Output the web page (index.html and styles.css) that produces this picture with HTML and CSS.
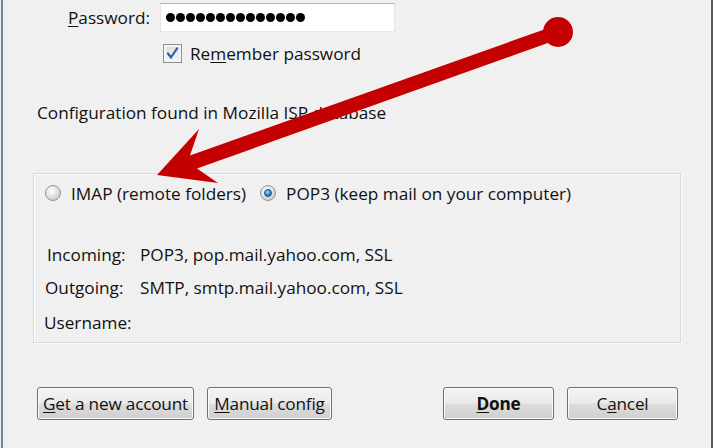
FILE: index.html
```html
<!DOCTYPE html>
<html>
<head>
<meta charset="utf-8">
<link rel="stylesheet" href="styles.css">
</head>
<body>
<div class="window">
  <div class="pw-row">
    <label class="pw-label"><u>P</u>assword:</label>
    <div class="input">
      <span class="dot"></span><span class="dot"></span><span class="dot"></span><span class="dot"></span><span class="dot"></span><span class="dot"></span><span class="dot"></span><span class="dot"></span><span class="dot"></span><span class="dot"></span><span class="dot"></span><span class="dot"></span><span class="dot"></span><span class="dot"></span>
    </div>
  </div>
  <div class="check-row">
    <span class="checkbox">
      <svg width="13" height="13" viewBox="0 0 13 13"><path d="M2 6.5 L5 10.5 L11 1.5" fill="none" stroke="#2c5fb0" stroke-width="2.2" stroke-linecap="round" stroke-linejoin="round"/></svg>
    </span>
    <span class="check-text">Re<u>m</u>ember password</span>
  </div>
  <div class="config">Configuration found in Mozilla ISP database</div>
  <div class="group">
    <div class="radio-row">
      <span class="radio"></span>
      <span class="radio-text">IMAP (remote folders)</span>
      <span class="radio checked"></span>
      <span class="radio-text">POP3 (keep mail on your computer)</span>
    </div>
    <div class="details">
      <span class="dl in">Incoming:</span><span class="dv">POP3, pop.mail.yahoo.com, SSL</span>
      <span class="dl out">Outgoing:</span><span class="dv">SMTP, smtp.mail.yahoo.com, SSL</span>
      <span class="dl user">Username:</span><span class="dv"></span>
    </div>
  </div>
  <div class="buttons">
    <button class="btn btn-get"><u>G</u>et a new account</button>
    <button class="btn btn-manual"><u>M</u>anual config</button>
    <span class="spacer"></span>
    <button class="btn btn-done"><b><u>D</u>one</b></button>
    <button class="btn btn-cancel">C<u>a</u>ncel</button>
  </div>
  <svg class="arrow" width="713" height="448" viewBox="0 0 713 448">
    <polygon points="157,175 199,129 190,155.5 555.6,25.4 560.4,38.6 197,168.5 218,183" fill="#c40000"/>
    <circle cx="558" cy="32" r="15" fill="#c40000"/>
  </svg>
</div>
</body>
</html>
```

FILE: styles.css
```css
* { box-sizing: border-box; }
html, body { margin: 0; padding: 0; }
body {
  width: 713px;
  height: 448px;
  overflow: hidden;
  background: #f0f0f0;
  font-family: "Open Sans", "Noto Sans", sans-serif;
  font-size: 17.2px;
  color: #111;
}
.window {
  position: relative;
  height: 448px;
  margin-left: 1px;
  border-left: 2px solid #6f8497;
  border-right: 2px solid #5a5a5a;
  background: #f0f0f0;
}
u { text-decoration: underline; text-underline-offset: 2px; }

.pw-row {
  display: flex;
  align-items: center;
  padding-top: 3px;
  height: 32px;
}
.pw-label {
  width: 147px;
  text-align: right;
  margin-right: 10px;
}
.input {
  width: 235px;
  height: 29px;
  background: #fff;
  border-top: 1px solid #b5b5b5;
  border-left: 1px solid #e4e4e4;
  border-right: 1px solid #e4e4e4;
  border-bottom: 1px solid #e9e9e9;
  display: flex;
  align-items: center;
  gap: 1px;
  padding-left: 5px;
}
.dot {
  width: 9px;
  height: 9px;
  border-radius: 50%;
  background: #000;
}

.check-row {
  display: flex;
  align-items: center;
  margin-top: 11px;
  padding-left: 160px;
  height: 20px;
}
.checkbox {
  width: 19px;
  height: 19px;
  border: 1px solid #8e8f8f;
  background: linear-gradient(#dcdcdc, #f6f6f6);
  box-shadow: inset 0 0 0 2px #f4f4f4;
  display: flex;
  align-items: center;
  justify-content: center;
  margin-right: 8px;
}

.config {
  margin-top: 38px;
  padding-left: 34px;
  line-height: 24px;
}

.group {
  margin-top: 48px;
  margin-left: 30px;
  width: 648px;
  height: 170px;
  border: 1px solid #dadada;
  box-shadow: 1px 1px 0 #fbfbfb, inset 1px 1px 0 #fbfbfb;
  padding-top: 8px;
}
.radio-row {
  display: flex;
  align-items: center;
  padding-left: 11px;
  height: 22px;
}
.radio {
  width: 16px;
  height: 16px;
  border-radius: 50%;
  border: 1px solid #959595;
  background: radial-gradient(circle at 40% 35%, #fff 0, #e2e2e2 45%, #bdbdbd 100%);
  margin-right: 10px;
  position: relative;
}
.radio.checked::after {
  content: "";
  position: absolute;
  left: 3px;
  top: 3px;
  width: 8px;
  height: 8px;
  border-radius: 50%;
  border: 1px solid #1b4f86;
  box-sizing: border-box;
  background: radial-gradient(circle at 40% 35%, #a8e6ff 0, #2f94dc 45%, #124a88 100%);
}
.radio-text { margin-right: 14px; }

.details {
  display: grid;
  grid-template-columns: 96px auto;
  grid-auto-rows: 33px;
  align-items: center;
  margin-top: 34px;
  padding-left: 10px;
}
.dl.in { padding-left: 3px; }
.dl.out { padding-left: 1px; }
.dl.user { padding-top: 3px; }

.buttons {
  display: flex;
  margin-top: 44px;
  padding-left: 34px;
  padding-right: 33px;
  gap: 13px;
}
.spacer { flex: 1; }
.btn {
  height: 33px;
  font-family: inherit;
  font-size: 17.2px;
  color: #111;
  white-space: nowrap;
  letter-spacing: -0.2px;
  border: 1px solid #707070;
  border-radius: 3px;
  background: linear-gradient(#f3f3f3 0%, #ebebeb 48%, #dddddd 52%, #cfcfcf 100%);
  box-shadow: inset 0 0 0 1px #fbfbfb;
  padding: 0;
  display: flex;
  align-items: center;
  justify-content: center;
}
.btn-get { width: 157px; }
.btn-manual { width: 125px; }
.btn-done { width: 111px; }
.btn-cancel { width: 111px; }

.arrow {
  position: absolute;
  left: -3px;
  top: 0;
  pointer-events: none;
}
```
